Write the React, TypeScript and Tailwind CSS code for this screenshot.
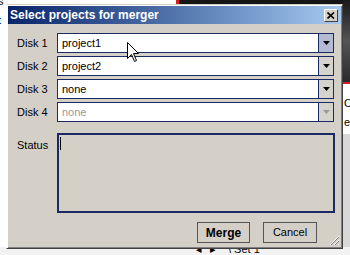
import React from "react";

const Arrow = ({ gray }: { gray?: boolean }) => (
  <svg width="7" height="4" viewBox="0 0 7 4">
    <path d="M0 0 H7 L3.5 4 Z" fill={gray ? "#9a9a9a" : "#000"} />
  </svg>
);

function Combo({ value, disabled, hot }: { value: string; disabled?: boolean; hot?: boolean }) {
  return (
    <div className="flex h-[20px] w-[277px] border border-[#1a2a62] bg-white">
      <div className={`flex flex-1 items-center pl-[4px] text-[11px] ${disabled ? "text-[#9a9a9a]" : "text-black"}`}>
        {value}
      </div>
      <div
        className={`flex w-[15px] items-center justify-center border-l border-[#1a2a62] ${
          hot ? "bg-[#b4bad2]" : "bg-[#d6d3cc]"
        }`}
      >
        <Arrow gray={disabled} />
      </div>
    </div>
  );
}

export default function App() {
  return (
    <div
      className="relative h-[255px] w-[350px] overflow-hidden bg-[#e9e8e4]"
      style={{ fontFamily: '"Liberation Sans", Arial, sans-serif' }}
    >
      {/* background desktop fragments */}
      <div className="absolute left-0 top-0 h-[4px] w-[176px] bg-white" />
      <div className="absolute left-[176px] top-0 h-[4px] w-[3px] bg-[#d02020]" />
      <div className="absolute left-[179px] top-0 h-[4px] w-[171px] bg-[#151515]" />
      <div className="absolute left-0 top-0 h-[250px] w-[6px] bg-white text-[11px] leading-none text-black">
        <div className="-ml-[2px] -mt-[4px]">s</div>
        <div className="-ml-[2px] mt-[8px]">t</div>
      </div>
      <div className="absolute right-0 top-0 h-[82px] w-[7px] bg-gradient-to-b from-[#1a1a1a] via-[#555] to-[#2a2a2a]" />
      <div className="absolute right-0 top-[82px] h-[2px] w-[7px] bg-[#d02020]" />
      <div className="absolute right-0 top-[84px] h-[50px] w-[7px] bg-white text-[11px] leading-none text-black">
        <div className="ml-[1px] mt-[14px]">O</div>
        <div className="ml-[1px] mt-[8px]">e</div>
      </div>
      <div className="absolute right-0 top-[134px] h-[121px] w-[7px] bg-[#d8d8d8]" />
      <div className="absolute bottom-0 left-0 flex h-[8px] w-[350px] items-end bg-[#f2f2f2] text-[11px] leading-none text-black">
        <div className="ml-[196px] flex items-center gap-[8px]">
          <span>◂</span>
          <span>▸</span>
          <span className="ml-[4px]">\ Set 1</span>
        </div>
      </div>

      {/* dialog window */}
      <div className="absolute left-[6px] top-[4px] flex h-[245px] w-[337px] flex-col border border-b-[#404040] border-l-white border-r-[#404040] border-t-[#d4d0c8] bg-[#d4d0c8] p-px shadow-[inset_1px_1px_0_#fff,inset_-1px_-1px_0_#808080]">
        {/* title bar */}
        <div className="flex h-[18px] items-center bg-gradient-to-r from-[#0a246a] to-[#a6caf0] pl-[2px] pr-[3px]">
          <span className="flex-1 text-[12px] font-bold text-white">Select projects for merger</span>
          <div className="flex h-[13px] w-[14px] items-center justify-center border border-b-[#404040] border-l-white border-r-[#404040] border-t-white bg-[#d4d0c8]">
            <svg width="8" height="7" viewBox="0 0 8 7">
              <path d="M0.5 0.5 L7 6.5 M7 0.5 L0.5 6.5" stroke="#000" strokeWidth="1.6" />
            </svg>
          </div>
        </div>

        {/* content */}
        <div className="flex flex-1 flex-col pl-[9px] pt-[9px] text-[11px] text-black">
          <div className="flex flex-col gap-[3px]">
            {[
              { l: "Disk 1", v: "project1", hot: true },
              { l: "Disk 2", v: "project2" },
              { l: "Disk 3", v: "none" },
              { l: "Disk 4", v: "none", d: true },
            ].map((r) => (
              <div key={r.l} className="flex items-center">
                <div className="w-[40px]">{r.l}</div>
                <Combo value={r.v} disabled={r.d} hot={r.hot} />
              </div>
            ))}
          </div>

          <div className="mt-[11px] flex">
            <div className="w-[40px] pt-[4px]">Status</div>
            <div className="h-[80px] w-[278px] border-2 border-[#1a2a62] bg-[#d4d0c8] pl-[1px] pt-[2px]">
              <div className="h-[13px] w-px bg-black" />
            </div>
          </div>

          <div className="mt-[9px] flex justify-end gap-[13px] pr-[24px]">
            <div className="flex h-[21px] w-[53px] items-center justify-center border border-[#555] bg-[#d4d0c8] text-[12px] font-bold">
              Merge
            </div>
            <div className="flex h-[21px] w-[54px] items-center justify-center border border-[#555] bg-[#d4d0c8] text-[11px]">
              Cancel
            </div>
          </div>
        </div>

        {/* resize grip */}
        <svg className="absolute bottom-[2px] right-[2px]" width="12" height="12" viewBox="0 0 12 12">
          <path d="M11 2 L2 11 M11 6 L6 11 M11 10 L10 11" stroke="#fff" strokeWidth="1" />
          <path d="M11 3 L3 11 M11 7 L7 11" stroke="#808080" strokeWidth="1" />
        </svg>
      </div>

      {/* mouse pointer */}
      <svg className="absolute left-[127px] top-[42px]" width="13" height="21" viewBox="0 0 13 21">
        <path
          d="M0.5 0.5 L0.5 16.5 L4.5 12.5 L7.5 19.5 L9.5 18.5 L6.5 11.5 L11.5 11.5 Z"
          fill="#fff"
          stroke="#000"
          strokeWidth="1"
        />
      </svg>
    </div>
  );
}
